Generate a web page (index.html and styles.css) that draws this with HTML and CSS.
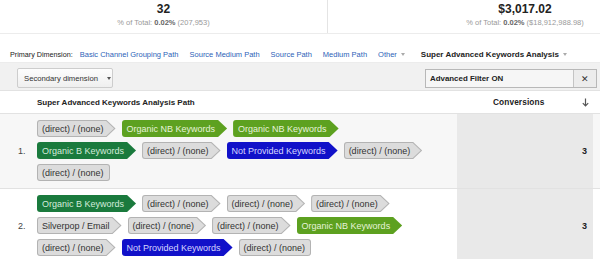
FILE: index.html
```html
<!DOCTYPE html>
<html>
<head>
<meta charset="utf-8">
<link rel="stylesheet" href="styles.css">
</head>
<body>
<div class="page">
  <section class="summary">
    <div class="metric">
      <div class="value">32</div>
      <div class="sub">% of Total: <b>0.02%</b> (207,953)</div>
    </div>
    <div class="metric divided">
      <div class="value">$3,017.02</div>
      <div class="sub">% of Total: <b>0.02%</b> ($18,912,988.98)</div>
    </div>
  </section>

  <nav class="dims">
    <span class="label">Primary Dimension:</span>
    <a class="link">Basic Channel Grouping Path</a>
    <a class="link">Source Medium Path</a>
    <a class="link">Source Path</a>
    <a class="link">Medium Path</a>
    <a class="link">Other <span class="caret light"></span></a>
    <span class="active">Super Advanced Keywords Analysis <span class="caret light"></span></span>
  </nav>

  <div class="toolbar">
    <button class="secondary">Secondary dimension <span class="caret dark"></span></button>
    <div class="filter">
      <span class="filter-text">Advanced Filter ON</span>
      <span class="clear">✕</span>
    </div>
  </div>

  <div class="table">
    <div class="trow thead">
      <div class="num"></div>
      <div class="path-head">Super Advanced Keywords Analysis Path</div>
      <div class="conv-head">Conversions
        <svg class="sort" width="7" height="9" viewBox="0 0 7 9"><path d="M3.5 0.5V8M0.8 5.2L3.5 8L6.2 5.2" fill="none" stroke="#555" stroke-width="1.2"/></svg>
      </div>
      <div class="edge"></div>
    </div>

    <div class="trow odd">
      <div class="num">1.</div>
      <div class="path">
        <span class="chip gray">(direct) / (none)</span>
        <span class="chip nb">Organic NB Keywords</span>
        <span class="chip nb">Organic NB Keywords</span>
        <span class="chip b">Organic B Keywords</span>
        <span class="chip gray">(direct) / (none)</span>
        <span class="chip np">Not Provided Keywords</span>
        <span class="chip gray">(direct) / (none)</span>
        <span class="chip gray last">(direct) / (none)</span>
      </div>
      <div class="conv">3</div>
      <div class="edge"></div>
    </div>

    <div class="trow even">
      <div class="num">2.</div>
      <div class="path">
        <span class="chip b">Organic B Keywords</span>
        <span class="chip gray">(direct) / (none)</span>
        <span class="chip gray">(direct) / (none)</span>
        <span class="chip gray">(direct) / (none)</span>
        <span class="chip gray">Silverpop / Email</span>
        <span class="chip gray">(direct) / (none)</span>
        <span class="chip gray">(direct) / (none)</span>
        <span class="chip nb">Organic NB Keywords</span>
        <span class="chip gray">(direct) / (none)</span>
        <span class="chip np">Not Provided Keywords</span>
        <span class="chip gray last">(direct) / (none)</span>
      </div>
      <div class="conv">3</div>
      <div class="edge"></div>
    </div>
  </div>
</div>
</body>
</html>
```

FILE: styles.css
```css
* { box-sizing: border-box; }
html, body { margin: 0; padding: 0; background: #fff; }
body {
  width: 600px;
  height: 259px;
  overflow: hidden;
  font-family: "Liberation Sans", Arial, sans-serif;
  color: #222;
}
.page { width: 600px; overflow: hidden; }

/* summary */
.summary {
  display: grid;
  grid-template-columns: 327px 1fr;
  height: 34px;
  border-bottom: 1px solid #ececec;
}
.metric { text-align: center; padding-top: 2px; }
.metric.divided { border-left: 1px solid #e4e4e4; padding-left: 122px; }
.value { font-size: 12px; font-weight: bold; line-height: 14px; color: #222; }
.sub { font-size: 7.5px; line-height: 10px; margin-top: 2px; color: #999; white-space: nowrap; }
.sub b { color: #666; }

/* dimension links */
.dims {
  display: flex;
  align-items: center;
  height: 28px;
  padding: 13px 0 0 10px;
  font-size: 7.5px;
  line-height: 10px;
  white-space: nowrap;
}
.label { color: #222; margin-right: 7px; font-size: 7.2px; }
.link { color: #2d5fb8; margin-right: 11px; display: inline-flex; align-items: center; }
.active { font-weight: bold; font-size: 8px; color: #222; margin-left: 5px; display: inline-flex; align-items: center; }
.caret {
  display: inline-block;
  width: 0; height: 0;
  border-left: 2.5px solid transparent;
  border-right: 2.5px solid transparent;
  border-top: 3px solid #999;
  margin-left: 4px;
}
.caret.light { border-top-color: #aaa; }
.caret.dark { border-top-color: #555; }

/* toolbar */
.toolbar {
  display: flex;
  justify-content: space-between;
  align-items: flex-start;
  height: 28px;
  padding: 5px 3px 0 17px;
  background: #f1f1f1;
  border-top: 1px solid #ececec;
}
.secondary {
  display: flex;
  align-items: center;
  width: 96px;
  height: 20px;
  padding: 0 0 0 6px;
  margin: 0;
  font-family: inherit;
  font-size: 7.7px;
  color: #333;
  background: linear-gradient(#fdfdfd, #efefef);
  border: 1px solid #cdcdcd;
  border-radius: 2px;
}
.secondary .caret { margin-left: 9px; }
.filter {
  display: flex;
  width: 172px;
  height: 19px;
  margin-top: 1px;
  border: 1px solid #b8b8b8;
  background: #f6f6f6;
}
.filter-text {
  flex: 1;
  display: flex;
  align-items: center;
  padding-left: 4px;
  font-size: 7.9px;
  font-weight: bold;
  color: #222;
}
.clear {
  width: 23px;
  display: flex;
  align-items: center;
  justify-content: center;
  border-left: 1px solid #c4c4c4;
  background: #ececec;
  font-size: 9px;
  color: #333;
}

/* table */
.trow {
  display: grid;
  grid-template-columns: 37px 420px 136px 1fr;
  border-bottom: 1px solid #e2e2e2;
}
.thead {
  height: 24px;
  border-top: 1px solid #e2e2e2;
  align-items: center;
  background: #fff;
}
.path-head { font-size: 8px; font-weight: bold; color: #222; }
.conv-head {
  display: flex;
  align-items: center;
  font-size: 8.3px;
  font-weight: bold;
  color: #222;
  padding-left: 36px;
  letter-spacing: 0.1px;
}
.sort { margin-left: auto; margin-right: 4px; }
.odd { background: #f7f7f7; }
.even { background: #fff; }
.num {
  display: flex;
  align-items: center;
  padding-left: 18px;
  font-size: 9px;
  color: #444;
}
.path {
  display: flex;
  flex-wrap: wrap;
  align-content: flex-start;
  column-gap: 6px;
  row-gap: 5px;
  padding: 6px 22px 7px 0;
}
.conv {
  display: flex;
  align-items: center;
  justify-content: flex-end;
  padding-right: 6px;
  background: #e9e9e9;
  font-size: 9px;
  font-weight: bold;
  color: #222;
}

/* path chips */
.chip {
  position: relative;
  z-index: 0;
  display: inline-flex;
  align-items: center;
  height: 17px;
  padding: 0 12px 0 5px;
  font-size: 9px;
  white-space: nowrap;
  border-radius: 3px 0 0 3px;
  clip-path: polygon(0 0, calc(100% - 9px) 0, 100% 50%, calc(100% - 9px) 100%, 0 100%);
}
.chip.gray { background: #b3b3b3; color: #333; }
.chip.gray::before {
  content: "";
  position: absolute;
  z-index: -1;
  top: 1px; bottom: 1px; left: 1px; right: 1.5px;
  background: #dcdcdc;
  border-radius: 2px 0 0 2px;
  clip-path: polygon(0 0, calc(100% - 8px) 0, 100% 50%, calc(100% - 8px) 100%, 0 100%);
}
.chip.last {
  clip-path: none;
  border-radius: 3px;
  padding-right: 6px;
}
.chip.last::before { clip-path: none; border-radius: 2px; right: 1px; }
.chip.nb { background: #5da120; color: #e6f3da; }
.chip.b { background: #1a7a3d; color: #d4ecdc; }
.chip.np { background: #1111c9; color: #d6d6ff; }
```
